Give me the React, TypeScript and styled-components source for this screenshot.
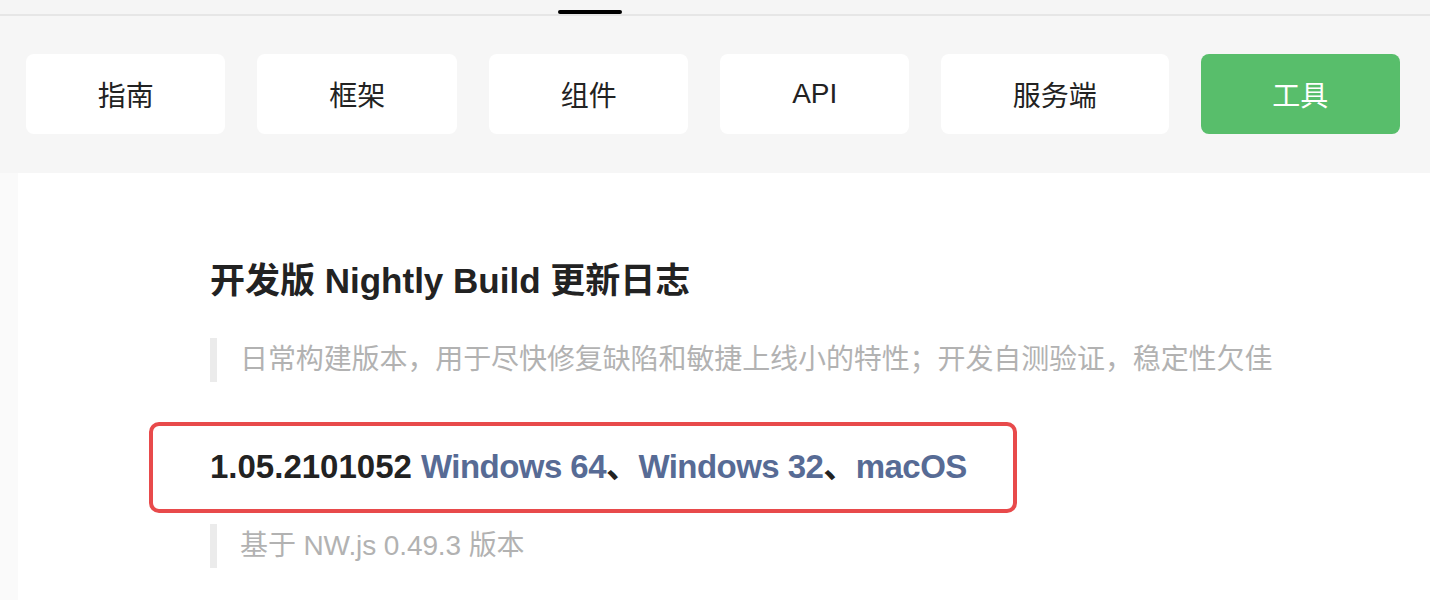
import styled, { createGlobalStyle } from "styled-components";

const GlobalStyle = createGlobalStyle`
  html, body {
    margin: 0;
    padding: 0;
    background: #ffffff;
  }
  body {
    font-family: "Liberation Sans", "Noto Sans CJK SC", sans-serif;
    color: #222;
  }
`;

const Page = styled.div`
  width: 1430px;
  height: 600px;
  overflow: hidden;
  display: flex;
  flex-direction: column;
`;

const TopStrip = styled.div`
  position: relative;
  height: 14px;
  background: #f5f5f5;
  border-bottom: 2px solid #e6e6e6;
`;

const Indicator = styled.div`
  position: absolute;
  left: 558px;
  top: 10px;
  width: 64px;
  height: 4px;
  border-radius: 2px;
  background: #000;
`;

const NavBar = styled.nav`
  display: flex;
  gap: 32px;
  padding: 38px 30px 39px 26px;
  background: #f6f6f6;
`;

const NavTab = styled.div<{ $active?: boolean }>`
  flex: 1 1 auto;
  height: 80px;
  display: flex;
  align-items: center;
  justify-content: center;
  border-radius: 8px;
  font-size: 28px;
  background: ${(p) => (p.$active ? "#58be6b" : "#ffffff")};
  color: ${(p) => (p.$active ? "#ffffff" : "#222222")};
`;

const Body = styled.div`
  flex: 1;
  display: flex;
`;

const SideStrip = styled.div`
  width: 18px;
  background: #fafafa;
`;

const Article = styled.main`
  flex: 1;
  padding: 83px 0 0 192px;
  display: flex;
  flex-direction: column;
  align-items: flex-start;
`;

const Title = styled.h1`
  margin: 0;
  font-size: 35px;
  line-height: 50px;
  font-weight: 700;
  color: #222;
`;

const Quote = styled.blockquote<{ $gap: number }>`
  margin: ${(p) => p.$gap}px 0 0 0;
  padding-left: 23px;
  border-left: 7px solid #ebebeb;
  font-size: 28px;
  line-height: 44px;
  letter-spacing: -0.1px;
  color: #b2b2b2;
`;

const Highlight = styled.div`
  margin: 40px 0 0 -61px;
  padding: 19px 46px 20px 57px;
  border: 4px solid #e84a4b;
  border-radius: 10px;
`;

const Version = styled.h3`
  margin: 0;
  font-size: 33px;
  line-height: 44px;
  font-weight: 700;
  color: #222;
  white-space: nowrap;
`;

const Downloads = styled.span`
  letter-spacing: -0.55px;
`;

const DownloadLink = styled.a`
  color: #576b95;
  text-decoration: none;
`;

const tabs = ["指南", "框架", "组件", "API", "服务端", "工具"];

export default function App() {
  return (
    <Page>
      <GlobalStyle />
      <TopStrip>
        <Indicator />
      </TopStrip>
      <NavBar>
        {tabs.map((t) => (
          <NavTab key={t} $active={t === "工具"}>
            {t}
          </NavTab>
        ))}
      </NavBar>
      <Body>
        <SideStrip />
        <Article>
          <Title>开发版 Nightly Build 更新日志</Title>
          <Quote $gap={32}>
            日常构建版本，用于尽快修复缺陷和敏捷上线小的特性；开发自测验证，稳定性欠佳
          </Quote>
          <Highlight>
            <Version>
              1.05.2101052{" "}
              <Downloads>
                <DownloadLink href="#">Windows 64</DownloadLink>、
                <DownloadLink href="#">Windows 32</DownloadLink>、
                <DownloadLink href="#">macOS</DownloadLink>
              </Downloads>
            </Version>
          </Highlight>
          <Quote $gap={11}>基于 NW.js 0.49.3 版本</Quote>
        </Article>
      </Body>
    </Page>
  );
}
